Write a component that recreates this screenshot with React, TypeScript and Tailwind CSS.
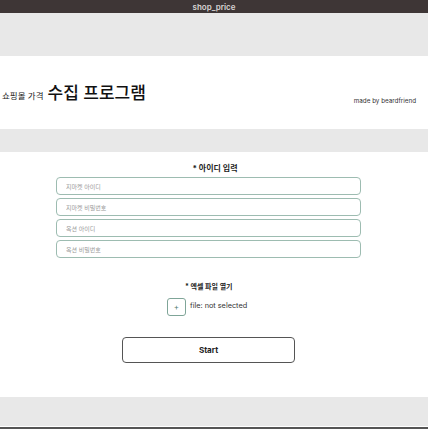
import { useState } from 'react';

const inputs = ['지마켓 아이디', '지마켓 비밀번호', '옥션 아이디', '옥션 비밀번호'];

export default function App() {
  const [values, setValues] = useState<string[]>(['', '', '', '']);

  return (
    <div className="w-[428px] h-[429px] flex flex-col bg-[#e8e8e8] overflow-hidden font-['Inter','Noto_Sans_CJK_KR',sans-serif]">
      <div className="h-[13px] bg-[#3e3636] flex items-center justify-center">
        <span className="text-[8px] font-semibold text-[#d8d4d4] leading-none">shop_price</span>
      </div>

      <div className="h-[43px]" />

      <div className="h-[73px] bg-white flex items-center justify-between pl-[2px] pr-[12px]">
        <div className="flex items-baseline gap-[4px] mt-[2px]">
          <span className="text-[8.5px] text-[#222]">쇼핑몰 가격</span>
          <span className="text-[17px] font-medium text-[#111] leading-none">수집 프로그램</span>
        </div>
        <span className="text-[6.3px] text-[#333] self-end mb-[23px]">made by beardfriend</span>
      </div>

      <div className="h-[23px]" />

      <div className="h-[245px] bg-white flex flex-col pt-[10px]">
        <h2 className="self-center ml-[2px] text-[8px] font-bold text-[#222] mb-[3px]">* 아이디 입력</h2>
        <div className="flex flex-col gap-[3px] w-[305px] ml-[56px]">
          {inputs.map((p, i) => (
            <input
              key={p}
              type={i % 2 === 1 ? 'password' : 'text'}
              placeholder={p}
              value={values[i]}
              onChange={(e) => {
                const next = [...values];
                next[i] = e.target.value;
                setValues(next);
              }}
              className="h-[18px] rounded-[4px] border border-[#9dbcb1] px-[9px] text-[6px] placeholder:text-[#999] outline-none"
            />
          ))}
        </div>

        <h2 className="ml-[185px] text-[7px] font-bold text-[#222] mt-[24px]">* 엑셀 파일 열기</h2>
        <div className="flex items-center gap-[4px] mt-[5px] ml-[167px]">
          <button className="w-[19px] h-[18px] rounded-[3px] border border-[#7fa598] flex items-center justify-center text-[8px] text-[#4f7d6e] leading-none">
            +
          </button>
          <span className="text-[7.3px] text-[#333]">file: not selected</span>
        </div>

        <button className="mt-[21px] ml-[122px] w-[173px] h-[26px] rounded-[4px] border border-[#555] text-[8px] font-bold text-[#222]">
          Start
        </button>
      </div>

      <div className="h-[29px]" />
      <div className="h-[1px] bg-white" />
      <div className="flex-1 bg-[#555]" />
    </div>
  );
}
